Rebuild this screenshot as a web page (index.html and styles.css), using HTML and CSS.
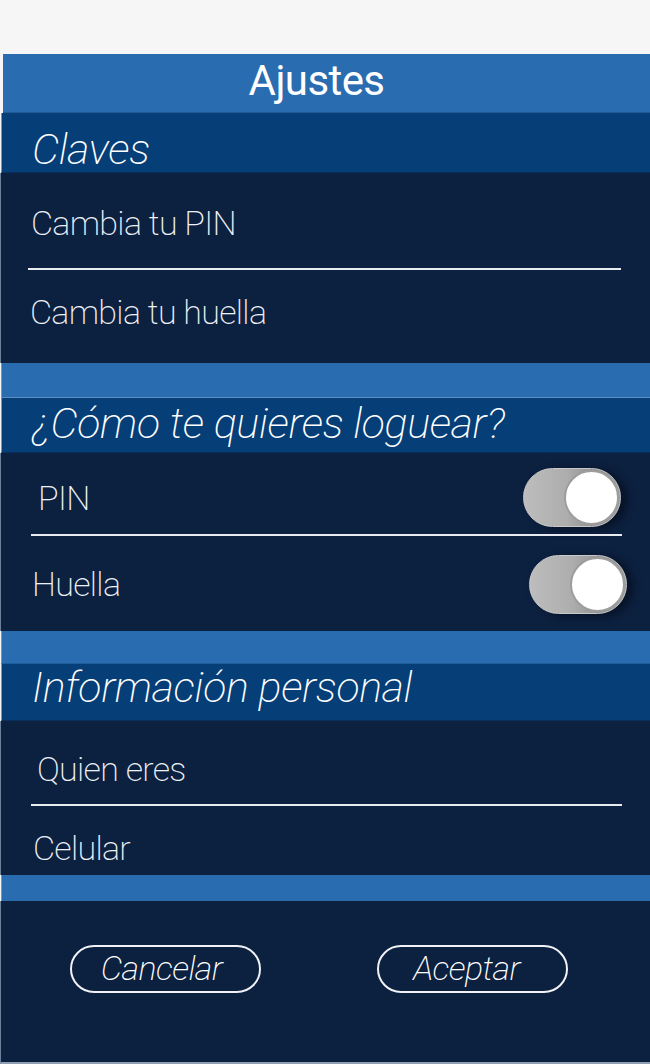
FILE: index.html
```html
<!DOCTYPE html>
<html lang="es">
<head>
<meta charset="utf-8">
<title>Ajustes</title>
<link rel="stylesheet" href="styles.css">
</head>
<body>
<div class="app">
  <header class="topbar">Ajustes</header>

  <div class="sec-title h60">Claves</div>
  <div class="panel">
    <div class="row r1 divider d-a"><span class="label pl31">Cambia tu PIN</span></div>
    <div class="row r2"><span class="label pl30">Cambia tu huella</span></div>
  </div>

  <div class="band b34"></div>
  <div class="sec-title h56">¿Cómo te quieres loguear?</div>
  <div class="panel">
    <div class="row r3 divider d-b">
      <span class="label pl38">PIN</span>
      <span class="toggle t1"><span class="knob"></span></span>
    </div>
    <div class="row r4">
      <span class="label pl32">Huella</span>
      <span class="toggle t2"><span class="knob"></span></span>
    </div>
  </div>

  <div class="band b32"></div>
  <div class="sec-title h58">Información personal</div>
  <div class="panel">
    <div class="row r5 divider d-b"><span class="label pl37">Quien eres</span></div>
    <div class="row r6"><span class="label pl33">Celular</span></div>
  </div>

  <div class="band b26"></div>
  <div class="footer">
    <button class="btn btn-cancel">Cancelar</button>
    <button class="btn btn-ok">Aceptar</button>
  </div>
</div>
</body>
</html>
```

FILE: styles.css
```css
html, body {
  margin: 0;
  padding: 0;
}
body {
  background: #f6f6f6;
  font-family: Roboto, "Liberation Sans", sans-serif;
  color: #ffffff;
  width: 650px;
  height: 1064px;
  overflow: hidden;
}
.app {
  margin-top: 54px;
  display: flex;
  flex-direction: column;
}
.topbar {
  height: 59px;
  margin-left: 3px;
  background: #2a6cb0;
  border-bottom: 1px solid #1f5a96;
  box-sizing: border-box;
  display: flex;
  align-items: center;
  justify-content: center;
  font-size: 42px;
  font-weight: 400;
  letter-spacing: -0.6px;
  padding: 0 20px 5px 0;
}
.sec-title {
  background: #063e77;
  margin-left: 1px;
  border-left: 1px solid #7f95ad;
  box-sizing: border-box;
  display: flex;
  align-items: center;
  padding-left: 30px;
  font-style: italic;
  font-weight: 200;
  font-size: 43px;
  letter-spacing: -0.3px;
  border-bottom: 1px solid #0b2f5c;
}
.h60 { height: 60px; padding-top: 13px; }
.h56 { height: 56px; border-top: 1px solid #5f8fc2; padding-bottom: 5px; }
.h58 { height: 58px; border-top: 1px solid #1e5c9a; padding-bottom: 10px; }
.panel {
  background: #0c2040;
  border-left: 1px solid #6e819a;
  display: flex;
  flex-direction: column;
}
.row {
  position: relative;
  display: flex;
  align-items: center;
  justify-content: space-between;
  box-sizing: border-box;
}
.label {
  font-size: 34px;
  font-weight: 200;
  letter-spacing: -0.7px;
  color: #eef1f5;
}
.pl30 { padding-left: 29px; }
.pl31 { padding-left: 30px; }
.pl32 { padding-left: 31px; }
.pl33 { padding-left: 32px; }
.pl37 { padding-left: 36px; }
.pl38 { padding-left: 37px; }

.divider::after {
  content: "";
  position: absolute;
  bottom: 0;
  height: 2px;
  background: #e8ebef;
}
.d-a::after { left: 27px; width: 593px; }
.d-b::after { left: 30px; width: 591px; }

.r1 { height: 97px; padding-top: 3px; }
.r2 { height: 93px; padding-bottom: 10px; }
.r3 { height: 83px; padding-top: 6px; }
.r4 { height: 95px; padding-top: 1px; }
.r5 { height: 85px; padding-top: 10px; }
.r6 { height: 69px; padding-top: 15px; }

.toggle {
  position: relative;
  width: 98px;
  height: 59px;
  border-radius: 30px;
  box-sizing: border-box;
  background: linear-gradient(90deg, #bdbdbd 0%, #adadad 45%, #8e8e8e 75%, #9c9c9c 100%);
  border: 1px solid #c9c9c9;
  box-shadow: 6px 2px 10px rgba(0, 0, 0, 0.45);
}
.t1 { margin-right: 29px; }
.t2 { margin-right: 23px; }
.knob {
  position: absolute;
  right: 1px;
  top: 1px;
  width: 55px;
  height: 55px;
  box-sizing: border-box;
  border-radius: 50%;
  background: #ffffff;
  border: 2px solid #9d9d9d;
}

.band {
  background: #2a6cb0;
  margin-left: 1px;
  border-left: 1px solid #7f95ad;
}
.b34 { height: 34px; }
.b32 { height: 32px; }
.b26 { height: 26px; }

.footer {
  background: #0c2040;
  border-left: 1px solid #6e819a;
  border-bottom: 2px solid #8fa0b5;
  height: 163px;
  box-sizing: border-box;
  display: flex;
  align-items: flex-start;
  padding-top: 44px;
  padding-left: 69px;
  gap: 116px;
}
.btn {
  width: 191px;
  height: 48px;
  box-sizing: border-box;
  border: 2px solid #f0f2f5;
  border-radius: 24px;
  background: transparent;
  color: #ffffff;
  font-family: Roboto, "Liberation Sans", sans-serif;
  font-style: italic;
  font-weight: 200;
  font-size: 34px;
  letter-spacing: -0.6px;
  padding: 0 0 2px 0;
  display: flex;
  align-items: center;
  justify-content: center;
}
.btn-cancel { padding-right: 8px; }
.btn-ok { padding-right: 12px; }
```
